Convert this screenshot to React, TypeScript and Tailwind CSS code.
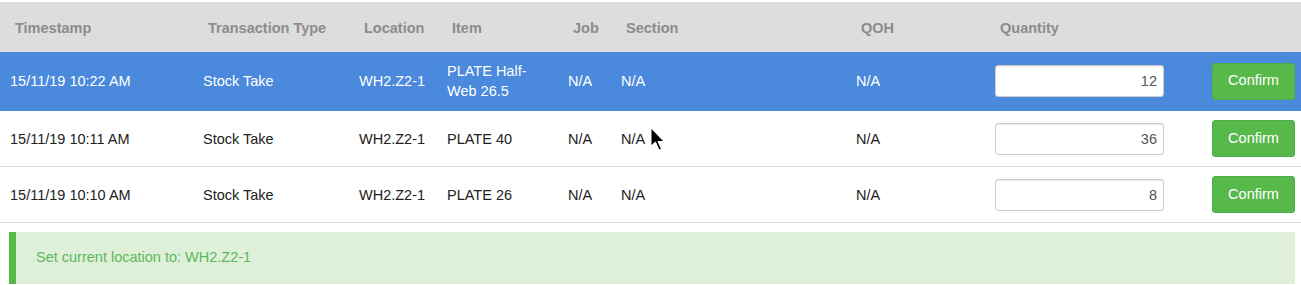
const columns = [
  "Timestamp",
  "Transaction Type",
  "Location",
  "Item",
  "Job",
  "Section",
  "QOH",
  "Quantity",
  "",
];

type Row = {
  timestamp: string;
  type: string;
  location: string;
  item: string;
  job: string;
  section: string;
  qoh: string;
  quantity: string;
};

const rows: Row[] = [
  {
    timestamp: "15/11/19 10:22 AM",
    type: "Stock Take",
    location: "WH2.Z2-1",
    item: "PLATE Half-Web 26.5",
    job: "N/A",
    section: "N/A",
    qoh: "N/A",
    quantity: "12",
  },
  {
    timestamp: "15/11/19 10:11 AM",
    type: "Stock Take",
    location: "WH2.Z2-1",
    item: "PLATE 40",
    job: "N/A",
    section: "N/A",
    qoh: "N/A",
    quantity: "36",
  },
  {
    timestamp: "15/11/19 10:10 AM",
    type: "Stock Take",
    location: "WH2.Z2-1",
    item: "PLATE 26",
    job: "N/A",
    section: "N/A",
    qoh: "N/A",
    quantity: "8",
  },
];

const grid =
  "grid grid-cols-[193px_156px_88px_121px_53px_235px_139px_217px_1fr] items-center";

function TableRow({ row, selected }: { row: Row; selected: boolean }) {
  const cells = [
    row.timestamp,
    row.type,
    row.location,
    row.item,
    row.job,
    row.section,
    row.qoh,
  ];
  return (
    <div
      className={`${grid} min-h-[56px] border-b ${
        selected
          ? "border-[#4a89dc] bg-[#4a89dc] text-white"
          : "border-[#dddddd] bg-white text-[#222222]"
      }`}
    >
      {cells.map((value, i) => (
        <div key={i} className="py-[9px] pl-[10px] pr-[10px] leading-5">
          {value}
        </div>
      ))}
      <div className="pl-[10px] pr-[6px]">
        <input
          readOnly
          value={row.quantity}
          className="h-[32px] w-[169px] rounded-[3px] border border-[#cccccc] bg-white px-[6px] text-right text-[14.5px] text-[#555555] shadow-[inset_0_1px_1px_rgba(0,0,0,0.075)] outline-none"
        />
      </div>
      <div className="pl-[10px]">
        <button className="h-[37px] w-[83px] rounded-[3px] border border-[#4cae4c] bg-[#58b94b] text-[14.5px] text-white">
          Confirm
        </button>
      </div>
    </div>
  );
}

function Cursor() {
  return (
    <svg
      className="pointer-events-none absolute left-[650px] top-[127px]"
      width="16"
      height="26"
      viewBox="0 0 16 26"
    >
      <path
        d="M1 1 L1 19 L5.5 15 L9 23 L11.5 22 L8 14.5 L14 14.5 Z"
        fill="#000"
        stroke="#fff"
        strokeWidth="1"
      />
    </svg>
  );
}

export default function App() {
  return (
    <div
      className="relative h-[285px] w-[1301px] overflow-hidden bg-white pt-[2px] text-[14.5px]"
      style={{ fontFamily: '"Liberation Sans", Arial, sans-serif' }}
    >
      <div className={`${grid} h-[50px] bg-[#dddddd] pt-[3px]`}>
        {columns.map((c, i) => (
          <div key={i} className="pl-[15px] font-bold text-[#8c8c8c]">
            {c}
          </div>
        ))}
      </div>
      {rows.map((row, i) => (
        <TableRow key={i} row={row} selected={i === 0} />
      ))}
      <div className="ml-[9px] mr-[6px] mt-[9px] flex h-[52px] items-center border-l-[7px] border-[#58b94b] bg-[#dff0d8] pl-[20px] text-[#5cb85c]">
        Set current location to: WH2.Z2-1
      </div>
      <Cursor />
    </div>
  );
}
